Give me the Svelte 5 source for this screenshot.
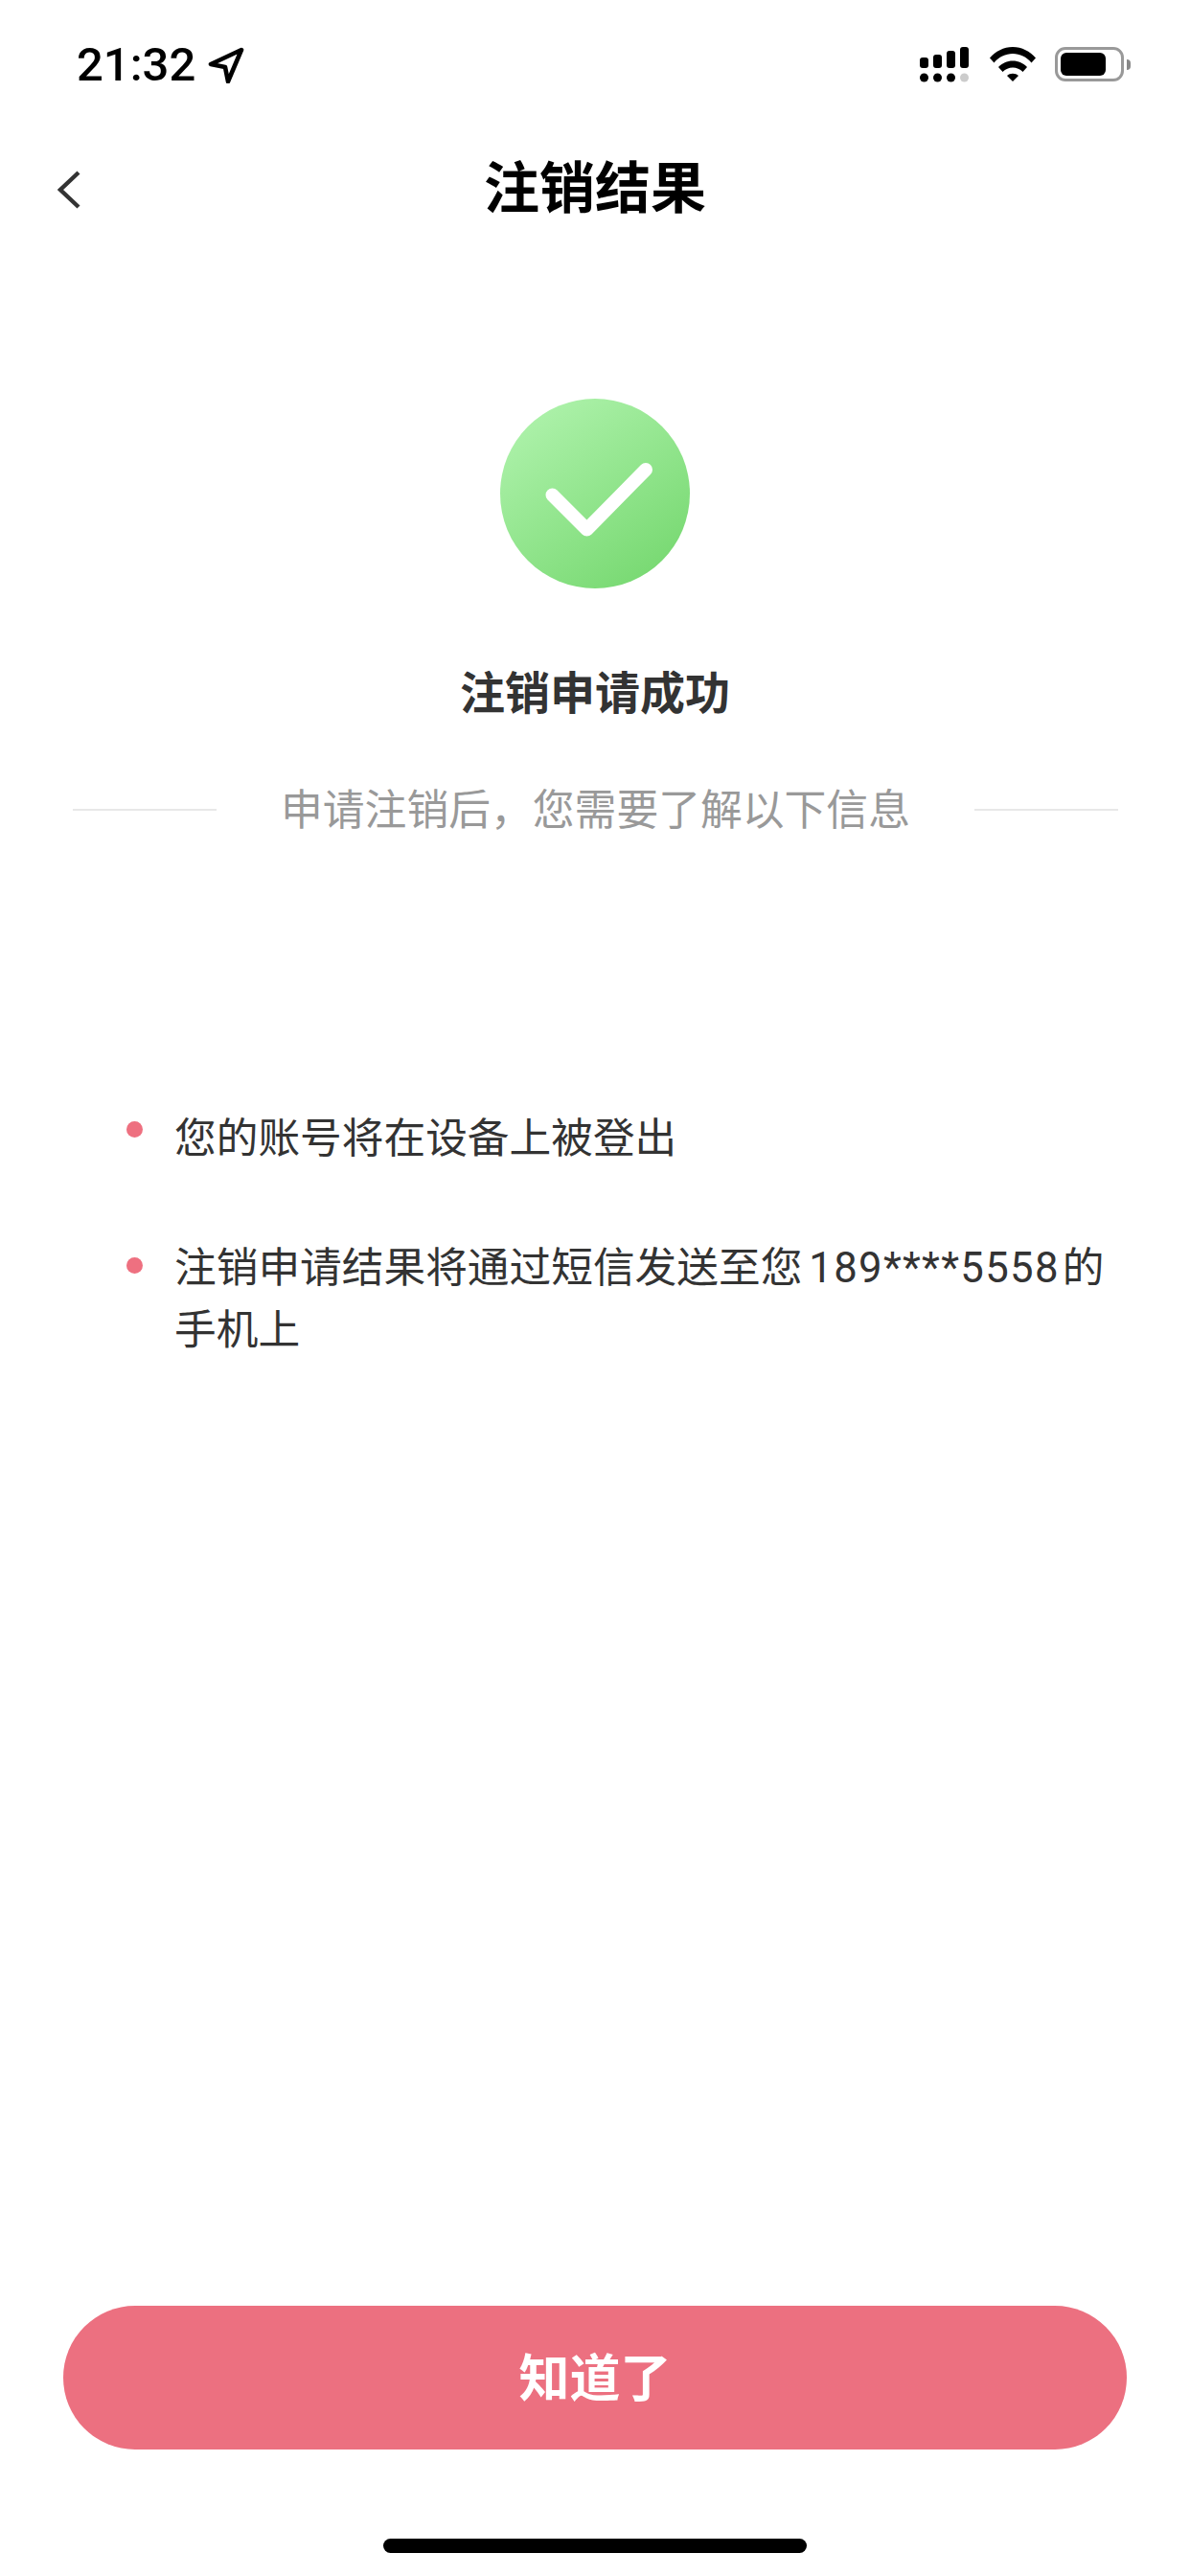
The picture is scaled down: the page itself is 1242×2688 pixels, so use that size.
<script>
  const notes = [
    { id: 'logout', parts: ['您的账号将在设备上被登出'] },
    { id: 'sms', parts: ['注销申请结果将通过短信发送至您', '189****5558', '的手机上'] }
  ];
</script>

<div class="page" lang="zh-CN">
  <div class="status-bar">
    <div class="clock">
      <span>21:32</span>
      <svg class="location" width="38" height="38" viewBox="0 0 38 38" fill="none" stroke="#000" stroke-width="4.6" stroke-linejoin="round">
        <path d="M35 3 3 18l15 3 3 15z" />
      </svg>
    </div>
    <div class="status-icons">
      <svg width="52" height="38" viewBox="0 0 52 38" fill="#000">
        <rect x="0" y="11" width="9" height="11" rx="3" />
        <rect x="14" y="8" width="9" height="14" rx="3" />
        <rect x="28" y="4" width="9" height="18" rx="3" />
        <rect x="42" y="0" width="9" height="22" rx="3" />
        <circle cx="4.5" cy="32" r="4.5" />
        <circle cx="18.5" cy="32" r="4.5" />
        <circle cx="32.5" cy="32" r="4.5" />
        <circle cx="46.5" cy="32" r="4.5" fill="#ccc" />
      </svg>
      <svg class="wifi" width="48" height="36" viewBox="0 0 48 36" fill="#000">
        <path d="M0 11.5C6 4.500 14.500 0 24 0s18 4.500 24 11.500l-4.500 5C38.500 10.500 31.500 7 24 7S9.500 10.500 4.500 16.500z" />
        <path d="M9 21c4-4 9-6.500 15-6.500S35 17 39 21l-4.500 5c-3-2.800-6.500-4.500-10.500-4.500S16.500 23.200 13.500 26z" />
        <path d="M18 30c1.700-1.400 3.700-2.200 6-2.200s4.300.8 6 2.200l-6 6z" />
      </svg>
      <div class="battery">
        <div class="battery-body"><div class="battery-level"></div></div>
        <div class="battery-nub"></div>
      </div>
    </div>
  </div>

  <div class="nav">
    <svg class="back" width="24" height="40" viewBox="0 0 24 40" fill="none" stroke="#333" stroke-width="4.4">
      <path d="M22 2 3 20l19 18" />
    </svg>
    <div class="nav-title">注销结果</div>
    <div></div>
  </div>

  <div class="badge">
    <svg width="198" height="198" viewBox="0 0 198 198">
      <defs>
        <linearGradient id="okGrad" x1="0.15" y1="0.05" x2="0.8" y2="0.95">
          <stop offset="0" stop-color="#aef2ab" />
          <stop offset="1" stop-color="#78d972" />
        </linearGradient>
      </defs>
      <circle cx="99" cy="99" r="99" fill="url(#okGrad)" />
      <path d="M54.500 100.500 90.500 136.500 152 74" fill="none" stroke="#fff" stroke-width="14" stroke-linecap="round" stroke-linejoin="round" />
    </svg>
  </div>

  <div class="result-title">注销申请成功</div>

  <div class="divider-row">
    <span class="rule"></span>
    <span class="divider-text">申请注销后，您需要了解以下信息</span>
    <span class="rule"></span>
  </div>

  <ul class="notes">
    {#each notes as note (note.id)}
      <li>
        <span class="dot"></span>
        <p>{#each note.parts as part, i}<span class:phone={i === 1}>{part}</span>{/each}</p>
      </li>
    {/each}
  </ul>

  <div class="footer">
    <button class="confirm">知道了</button>
    <div class="home-bar"></div>
  </div>
</div>

<style>
  :global(body) {
    margin: 0;
    background: #fff;
  }

  .page {
    width: 1242px;
    height: 2688px;
    display: flex;
    flex-direction: column;
    background: #fff;
    font-family: "Noto Sans CJK SC", sans-serif;
    overflow: hidden;
  }

  .status-bar {
    height: 136px;
    box-sizing: border-box;
    padding: 49px 62px 0 80px;
    display: flex;
    justify-content: space-between;
    align-items: flex-start;
  }

  .clock {
    display: flex;
    align-items: center;
    gap: 13px;
    height: 38px;
    font-family: Roboto, sans-serif;
    font-size: 49px;
    font-weight: 500;
    line-height: 38px;
    color: #000;
  }

  .status-icons {
    display: flex;
    align-items: flex-start;
    gap: 21px;
  }

  .battery {
    display: flex;
    align-items: center;
    gap: 3px;
    margin-left: -1px;
  }

  .battery-body {
    width: 72px;
    height: 36px;
    box-sizing: border-box;
    padding: 3px;
    border: 3px solid #999;
    border-radius: 11px;
    display: flex;
  }

  .battery-level {
    width: 47px;
    background: #000;
    border-radius: 6px;
  }

  .battery-nub {
    width: 4px;
    height: 11px;
    background: #888;
    border-radius: 0 4px 4px 0;
  }

  .nav {
    height: 112px;
    box-sizing: border-box;
    padding: 0 60px;
    display: grid;
    grid-template-columns: 1fr auto 1fr;
    align-items: center;
  }

  .back {
    margin-top: 12px;
  }

  .nav-title {
    font-size: 58px;
    font-weight: 700;
    color: #000;
    line-height: 1;
  }

  .badge {
    margin-top: 168px;
    display: flex;
    justify-content: center;
  }

  .result-title {
    margin-top: 76px;
    text-align: center;
    font-size: 47px;
    font-weight: 700;
    line-height: 60px;
    color: #333;
  }

  .divider-row {
    margin-top: 62px;
    padding: 0 75px 0 76px;
    display: flex;
    align-items: center;
    justify-content: space-between;
  }

  .rule {
    width: 150px;
    height: 2px;
    background: #e8e8e8;
  }

  .divider-text {
    margin-bottom: 6px;
    font-size: 43.8px;
    line-height: 60px;
    color: #999;
  }

  .notes {
    list-style: none;
    margin: 274px 0 0;
    padding: 0 75px 0 132px;
    display: flex;
    flex-direction: column;
    gap: 70px;
  }

  .notes li {
    display: flex;
    align-items: flex-start;
    gap: 33px;
  }

  .dot {
    flex: none;
    width: 17px;
    height: 17px;
    margin-top: 25px;
    border-radius: 50%;
    background: #ee7080;
  }

  .notes li:first-child .dot {
    margin-top: 18px;
  }

  .notes p {
    margin: 0;
    font-size: 43.7px;
    line-height: 65px;
    color: #333;
  }

  .phone {
    margin: 0 3px 0 7px;
    font-family: Roboto, sans-serif;
    letter-spacing: 1.3px;
    line-height: 1;
  }

  .footer {
    margin-top: auto;
    padding: 0 66px 24px;
    display: flex;
    flex-direction: column;
    align-items: center;
  }

  .confirm {
    width: 100%;
    height: 150px;
    box-sizing: border-box;
    padding: 0 0 7px;
    border: none;
    border-radius: 75px;
    background: #ec7080;
    color: #fff;
    font-family: inherit;
    font-size: 53px;
    font-weight: 700;
  }

  .home-bar {
    width: 442px;
    height: 15px;
    margin-top: 93px;
    border-radius: 8px;
    background: #000;
  }
</style>
